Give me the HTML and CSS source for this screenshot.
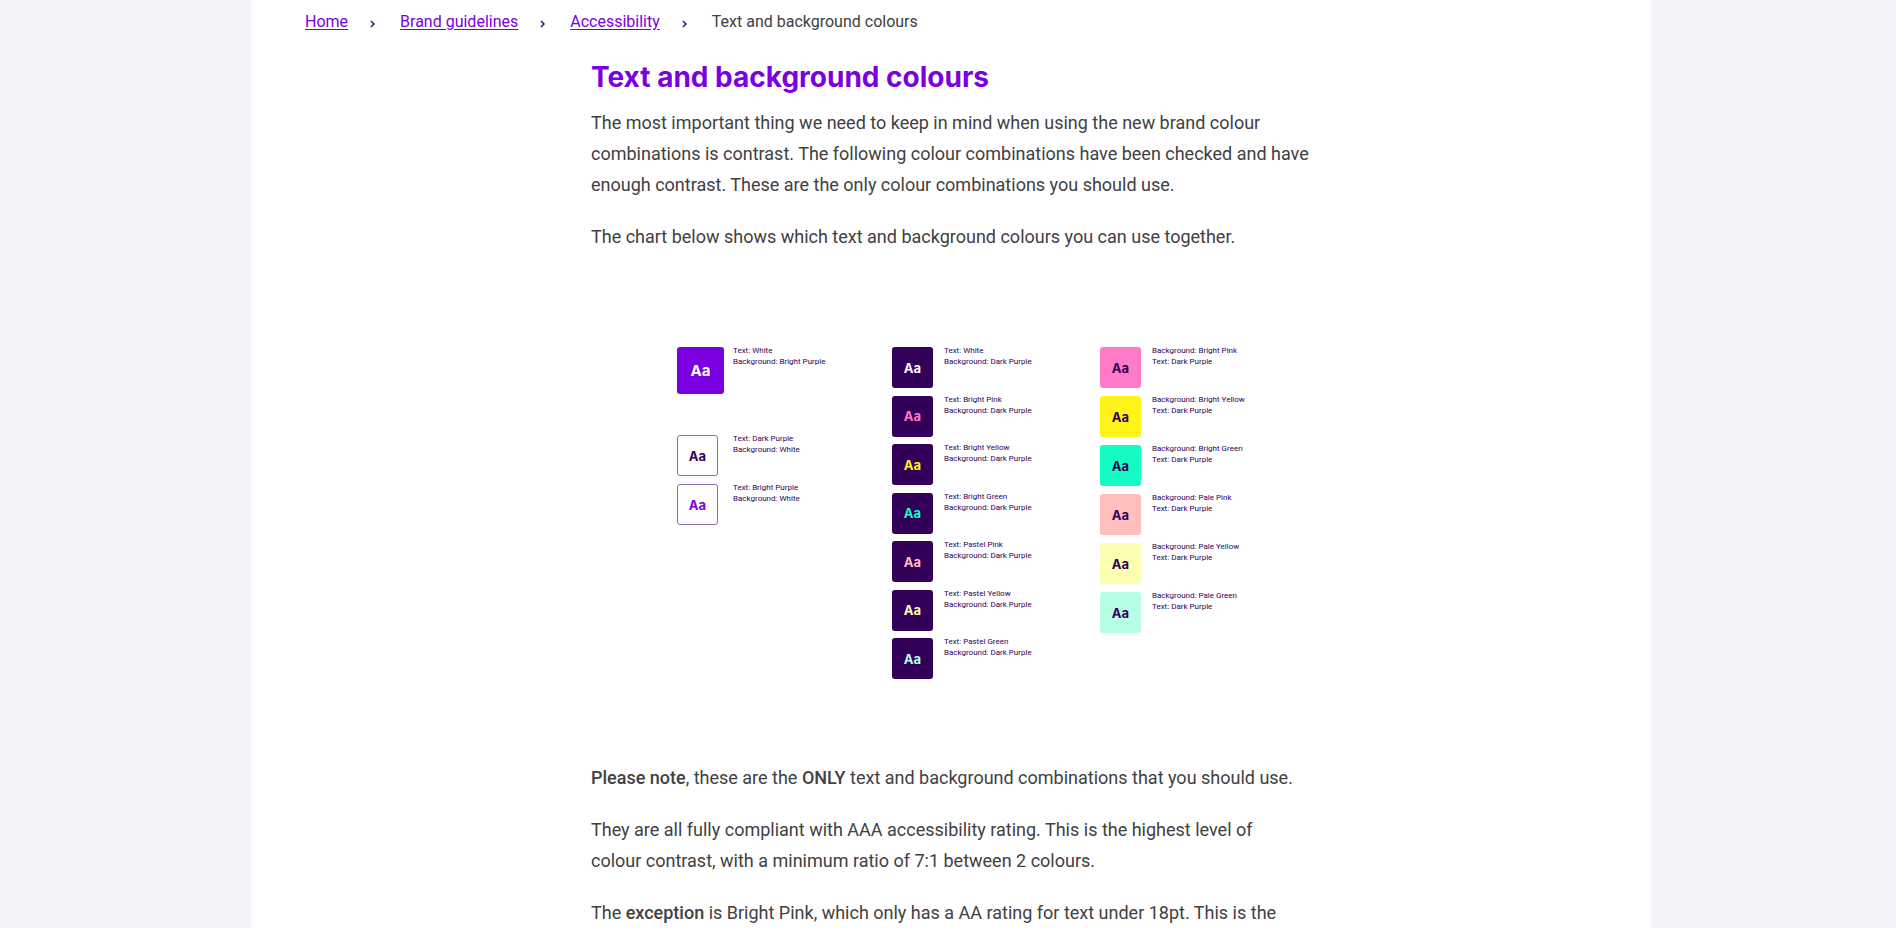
FILE: index.html
```
<!DOCTYPE html>
<html lang="en-GB">
<head>
<meta charset="utf-8">
<title>Text and background colours</title>
<link rel="stylesheet" href="styles.css">
</head>
<body>
<div class="page">
  <nav class="breadcrumb" aria-label="Breadcrumb">
    <ol class="crumbs">
      <li class="crumb"><a href="#">Home</a><svg class="chevron" viewBox="0 0 5 8" aria-hidden="true"><path d="M1 1l3 3-3 3"/></svg></li>
      <li class="crumb"><a href="#">Brand guidelines</a><svg class="chevron" viewBox="0 0 5 8" aria-hidden="true"><path d="M1 1l3 3-3 3"/></svg></li>
      <li class="crumb"><a href="#">Accessibility</a><svg class="chevron" viewBox="0 0 5 8" aria-hidden="true"><path d="M1 1l3 3-3 3"/></svg></li>
      <li class="crumb" aria-current="page">Text and background colours</li>
    </ol>
  </nav>
  <main class="content">
    <h1>Text and background colours</h1>
    <p>The most important thing we need to keep in mind when using the new brand colour combinations is contrast. The following colour combinations have been checked and have enough contrast. These are the only colour combinations you should use.</p>
    <p>The chart below shows which text and background colours you can use together.</p>
    <section class="chart" aria-label="Colour combinations">
      <div class="column">
        <div class="combo lead"><span class="swatch large on-bright">Aa</span><p class="label">Text: White<br>Background: Bright Purple</p></div>
        <div class="combo"><span class="swatch outlined">Aa</span><p class="label">Text: Dark Purple<br>Background: White</p></div>
        <div class="combo"><span class="swatch outlined bright">Aa</span><p class="label">Text: Bright Purple<br>Background: White</p></div>
      </div>
      <div class="column spread">
        <div class="combo"><span class="swatch dark white">Aa</span><p class="label">Text: White<br>Background: Dark Purple</p></div>
        <div class="combo"><span class="swatch dark pink">Aa</span><p class="label">Text: Bright Pink<br>Background: Dark Purple</p></div>
        <div class="combo"><span class="swatch dark yellow">Aa</span><p class="label">Text: Bright Yellow<br>Background: Dark Purple</p></div>
        <div class="combo"><span class="swatch dark green">Aa</span><p class="label">Text: Bright Green<br>Background: Dark Purple</p></div>
        <div class="combo"><span class="swatch dark pale-pink">Aa</span><p class="label">Text: Pastel Pink<br>Background: Dark Purple</p></div>
        <div class="combo"><span class="swatch dark pale-yellow">Aa</span><p class="label">Text: Pastel Yellow<br>Background: Dark Purple</p></div>
        <div class="combo"><span class="swatch dark pale-green">Aa</span><p class="label">Text: Pastel Green<br>Background: Dark Purple</p></div>
      </div>
      <div class="column">
        <div class="combo"><span class="swatch bg-pink">Aa</span><p class="label">Background: Bright Pink<br>Text: Dark Purple</p></div>
        <div class="combo"><span class="swatch bg-yellow">Aa</span><p class="label">Background: Bright Yellow<br>Text: Dark Purple</p></div>
        <div class="combo"><span class="swatch bg-green">Aa</span><p class="label">Background: Bright Green<br>Text: Dark Purple</p></div>
        <div class="combo"><span class="swatch bg-pale-pink">Aa</span><p class="label">Background: Pale Pink<br>Text: Dark Purple</p></div>
        <div class="combo"><span class="swatch bg-pale-yellow">Aa</span><p class="label">Background: Pale Yellow<br>Text: Dark Purple</p></div>
        <div class="combo"><span class="swatch bg-pale-green">Aa</span><p class="label">Background: Pale Green<br>Text: Dark Purple</p></div>
      </div>
    </section>
    <p><strong>Please note</strong>, these are the <strong>ONLY</strong> text and background combinations that you should use.</p>
    <p>They are all fully compliant with AAA accessibility rating. This is the highest level of<br>colour contrast, with a minimum ratio of 7:1 between 2 colours.</p>
    <p>The <strong>exception</strong> is Bright Pink, which only has a AA rating for text under 18pt. This is the</p>
  </main>
</div>
</body>
</html>
```
FILE: styles.css
```
* { box-sizing: border-box; }
html { overflow: hidden; }
body {
  margin: 0;
  padding-left: 6px;
  background: #f5f3fa;
  color: #414042;
  font-family: Roboto, "Liberation Sans", sans-serif;
  font-size: 18px;
  line-height: 31px;
}
.page {
  max-width: 1400px;
  min-height: 100vh;
  margin: 0 auto;
  padding: 9px 54px 0;
  background: #fff;
}
.crumbs {
  display: flex;
  flex-wrap: wrap;
  gap: 25px;
  margin: 0;
  padding: 0;
  list-style: none;
  font-size: 16px;
  line-height: 26px;
}
.crumb { display: flex; align-items: center; gap: 22px; }
.crumb a { color: #7a00df; text-underline-offset: 2px; }
.chevron {
  width: 5px;
  height: 8px;
  margin-top: 4px;
  fill: none;
  stroke: #320059;
  stroke-width: 1.4;
}
.content { max-width: 720px; margin: 0 auto; }
h1 {
  margin: 22px 0 10px;
  color: #7a00df;
  font: 700 28px/40px Inter, sans-serif;
}
p { margin: 0 0 21px; }
strong { font-weight: 500; }
.chart {
  display: grid;
  grid-template-columns: 215fr 208fr 211fr;
  margin-bottom: 21px;
  padding: 74px 0 62px 86px;
}
.column { display: flex; flex-direction: column; gap: 8px; }
.column.spread { gap: 0; justify-content: space-between; height: 332px; }
.combo { display: flex; gap: 11px; }
.combo.lead { gap: 9px; margin-bottom: 33px; }
.column:first-child .combo:not(.lead) { gap: 15px; }
.swatch {
  display: flex;
  align-items: center;
  justify-content: center;
  width: 41px;
  height: 41px;
  border-radius: 3px;
  color: #320059;
  font: 700 13px/16px Inter, sans-serif;
}
.label { margin: -2px 0 0; color: #320059; font-size: 8px; line-height: 11px; }
.large { width: 47px; height: 47px; font-size: 15px; }
.on-bright { background: #7a00df; color: #fff; }
.outlined { border: 1px solid #8c6ba3; }
.outlined.bright { color: #7a00df; }
.dark { background: #320059; }
.white { color: #fff; }
.pink { color: #ff7ac8; }
.yellow { color: #fff318; }
.green { color: #14fbc3; }
.pale-pink { color: #ffbfbd; }
.pale-yellow { color: #fdffb0; }
.pale-green { color: #b6ffe5; }
.bg-pink { background: #ff7ac8; }
.bg-yellow { background: #fff318; }
.bg-green { background: #14fbc3; }
.bg-pale-pink { background: #ffbfbd; }
.bg-pale-yellow { background: #fdffb0; }
.bg-pale-green { background: #b6ffe5; }
```
